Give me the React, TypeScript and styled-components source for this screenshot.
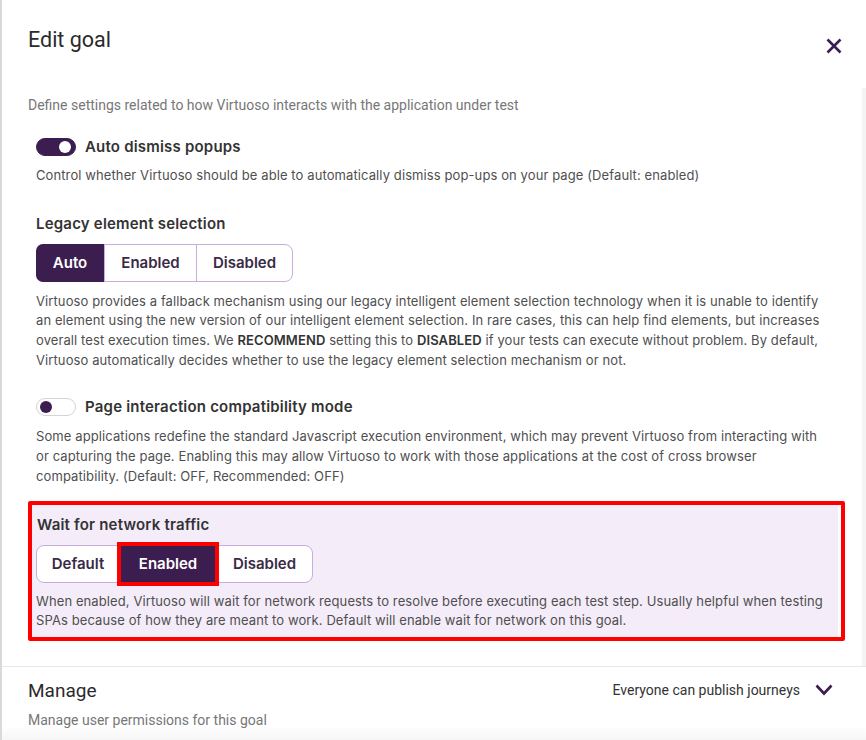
import React from "react";
import styled, { createGlobalStyle } from "styled-components";

const Global = createGlobalStyle`
  html, body { margin: 0; padding: 0; background: #fff; }
  body { font-family: Inter, "Noto Sans", sans-serif; }
  * { box-sizing: border-box; }
`;

const PURPLE = "#3c1d4f";

const Panel = styled.div`
  width: 866px;
  height: 740px;
  border-left: 2px solid #d9d9d9;
  display: flex;
  flex-direction: column;
  overflow: hidden;
  background: #fff;
`;

const Header = styled.div`
  display: flex;
  justify-content: space-between;
  align-items: flex-start;
  padding: 27px 24px 0 26px;
  height: 88px;
`;

const Title = styled.h1`
  margin: 0;
  font-family: Roboto, "Liberation Sans", sans-serif;
  font-weight: 400;
  font-size: 21.5px;
  color: #2b2b2b;
`;

const CloseBtn = styled.button`
  border: 0;
  background: none;
  padding: 0;
  margin-top: 11px;
  width: 16px;
  height: 16px;
  display: flex;
  cursor: pointer;
`;

const Scroll = styled.div`
  flex: 1;
  display: flex;
  flex-direction: column;
  padding: 0 17px 0 26px;
  border-right: 4px solid #f4f4f4;
`;

const Intro = styled.p`
  margin: 9px 0 0;
  font-family: Roboto, "Liberation Sans", sans-serif;
  font-size: 14px;
  color: #777;
`;

const Section = styled.div<{ $top: number }>`
  padding: 0 17px 0 8px;
  margin-top: ${(p) => p.$top}px;
`;

const ToggleRow = styled.div`
  display: flex;
  align-items: center;
  gap: 9px;
`;

const Toggle = styled.span<{ $on: boolean }>`
  width: 40px;
  height: 18px;
  border-radius: 9px;
  display: flex;
  align-items: center;
  padding: 0 3px;
  justify-content: ${(p) => (p.$on ? "flex-end" : "flex-start")};
  background: ${(p) => (p.$on ? PURPLE : "#fff")};
  border: 1px solid ${(p) => (p.$on ? PURPLE : "#d4d4d4")};
  &::after {
    content: "";
    width: 12px;
    height: 12px;
    border-radius: 50%;
    background: ${(p) => (p.$on ? "#fff" : PURPLE)};
    margin-right: ${(p) => (p.$on ? "1px" : "0")};
  }
`;

const Label = styled.div`
  font-size: 15px;
  font-weight: 600;
  letter-spacing: 0.2px;
  color: #333;
  line-height: 20px;
`;

const Desc = styled.p<{ $top?: number }>`
  margin: ${(p) => p.$top ?? 10}px 0 0;
  font-size: 13px;
  letter-spacing: 0.1px;
  line-height: 19.7px;
  color: #4f4f4f;
  b { font-weight: 600; color: #333; }
`;

const Group = styled.div`
  display: inline-flex;
  margin-top: 10px;
  border: 1px solid #c9aedb;
  border-radius: 8px;
  height: 38px;
  background: #fff;
`;

const Seg = styled.div<{ $active: boolean; $w: number; $first?: boolean; $last?: boolean; $mark?: boolean }>`
  width: ${(p) => p.$w}px;
  display: flex;
  align-items: center;
  justify-content: center;
  font-size: 15px;
  font-weight: 600;
  color: ${(p) => (p.$active ? "#fff" : "#3a2a45")};
  background: ${(p) => (p.$active ? PURPLE : "transparent")};
  border-left: ${(p) => (p.$first ? "0" : "1px solid #c9aedb")};
  border-radius: ${(p) => (p.$first ? "7px 0 0 7px" : p.$last ? "0 7px 7px 0" : "0")};
  margin: ${(p) => (p.$first ? "-1px 0 -1px -1px" : "0")};
  ${(p) =>
    p.$mark
      ? `outline: 4px solid #ff0000; outline-offset: -1px; position: relative; z-index: 1; margin: -1px 0; border-left: 0;`
      : ""}
`;

const Highlight = styled.div`
  margin-top: 14px;
  border: 4px solid #ff0000;
  border-radius: 2px;
  padding: 0 3px 0 0;
  background: #fff;
`;

const HighlightInner = styled.div`
  background: #f4ecf9;
  padding: 10px 4px 6px 4px;
`;

const HLabel = styled(Label)`
  padding-left: 1px;
`;

const Divider = styled.div`
  height: 1px;
  background: #e6e6e6;
  margin: 25px -21px 0 -26px;
`;

const Manage = styled.div`
  display: flex;
  justify-content: space-between;
  align-items: flex-start;
  padding: 12px 33px 0 26px;
  height: 73px;
  background: linear-gradient(#fff 80%, #f6f6f6);
  margin: 0 -21px 0 -26px;
`;

const ManageTitle = styled.h2`
  margin: 0;
  font-family: Roboto, "Liberation Sans", sans-serif;
  font-weight: 400;
  font-size: 19px;
  color: #2b2b2b;
`;

const ManageSub = styled.p`
  margin: 10px 0 0;
  font-family: Roboto, "Liberation Sans", sans-serif;
  font-size: 14px;
  color: #777;
`;

const Perm = styled.div`
  display: flex;
  align-items: center;
  gap: 15px;
  margin-top: 3px;
  font-family: Roboto, "Liberation Sans", sans-serif;
  font-size: 14px;
  color: #333;
`;

export default function App() {
  return (
    <>
      <Global />
      <Panel>
        <Header>
          <Title>Edit goal</Title>
          <CloseBtn aria-label="close">
            <svg width="16" height="16" viewBox="0 0 16 16">
              <path d="M1.5 1.5 L14.5 14.5 M14.5 1.5 L1.5 14.5" stroke={PURPLE} strokeWidth="2.6" />
            </svg>
          </CloseBtn>
        </Header>
        <Scroll>
          <Intro>Define settings related to how Virtuoso interacts with the application under test</Intro>

          <Section $top={24}>
            <ToggleRow>
              <Toggle $on />
              <Label>Auto dismiss popups</Label>
            </ToggleRow>
            <Desc $top={9}>
              Control whether Virtuoso should be able to automatically dismiss pop-ups on your page (Default: enabled)
            </Desc>
          </Section>

          <Section $top={28}>
            <Label>Legacy element selection</Label>
            <div>
              <Group>
                <Seg $active $w={68} $first>Auto</Seg>
                <Seg $active={false} $w={92}>Enabled</Seg>
                <Seg $active={false} $w={96} $last>Disabled</Seg>
              </Group>
            </div>
            <Desc $top={10}>
              Virtuoso provides a fallback mechanism using our legacy intelligent element selection technology when it is unable to identify an element using the new version of our intelligent element selection. In rare cases, this can help find elements, but increases overall test execution times. We <b>RECOMMEND</b> setting this to <b>DISABLED</b> if your tests can execute without problem. By default, Virtuoso automatically decides whether to use the legacy element selection mechanism or not.
            </Desc>
          </Section>

          <Section $top={27}>
            <ToggleRow>
              <Toggle $on={false} />
              <Label>Page interaction compatibility mode</Label>
            </ToggleRow>
            <Desc $top={10}>
              Some applications redefine the standard Javascript execution environment, which may prevent Virtuoso from interacting with or capturing the page. Enabling this may allow Virtuoso to work with those applications at the cost of cross browser compatibility. (Default: OFF, Recommended: OFF)
            </Desc>
          </Section>

          <Highlight>
            <HighlightInner>
              <HLabel>Wait for network traffic</HLabel>
              <div>
                <Group>
                  <Seg $active={false} $w={84} $first>Default</Seg>
                  <Seg $active $w={96} $mark>Enabled</Seg>
                  <Seg $active={false} $w={96} $last>Disabled</Seg>
                </Group>
              </div>
              <Desc $top={9}>
                When enabled, Virtuoso will wait for network requests to resolve before executing each test step. Usually helpful when testing SPAs because of how they are meant to work. Default will enable wait for network on this goal.
              </Desc>
            </HighlightInner>
          </Highlight>

          <Divider />
          <Manage>
            <div>
              <ManageTitle>Manage</ManageTitle>
              <ManageSub>Manage user permissions for this goal</ManageSub>
            </div>
            <Perm>
              Everyone can publish journeys
              <svg width="18" height="12" viewBox="0 0 18 12">
                <path d="M1.5 1.5 L9 9.5 L16.5 1.5" fill="none" stroke={PURPLE} strokeWidth="2.6" />
              </svg>
            </Perm>
          </Manage>
        </Scroll>
      </Panel>
    </>
  );
}
